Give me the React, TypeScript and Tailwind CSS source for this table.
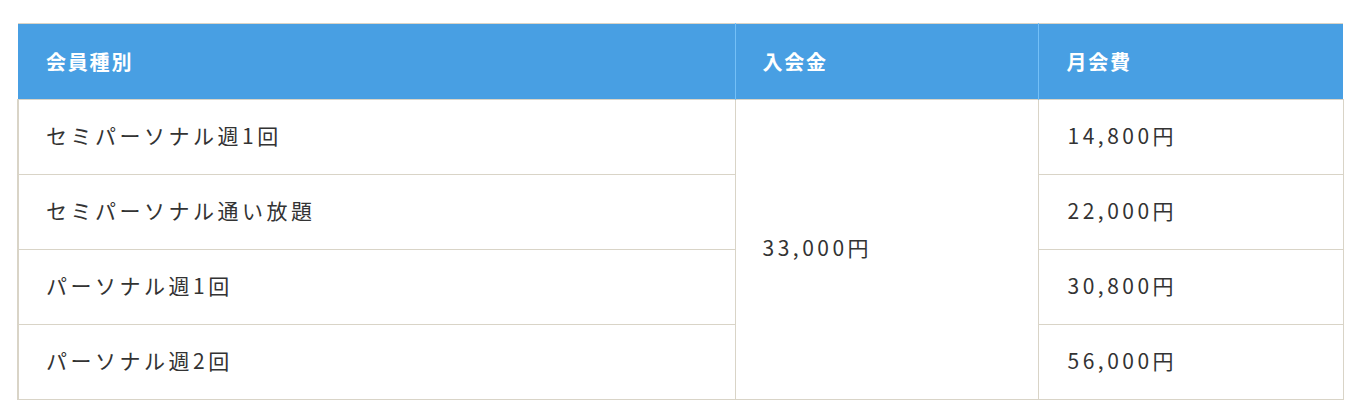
const rows = [
  { name: "セミパーソナル週1回", fee: "14,800円" },
  { name: "セミパーソナル通い放題", fee: "22,000円" },
  { name: "パーソナル週1回", fee: "30,800円" },
  { name: "パーソナル週2回", fee: "56,000円" },
];

const App = () => {
  return (
    <div
      className="min-h-[420px] bg-white pt-[23px] pl-[17px]"
      style={{ fontFamily: '"Noto Sans CJK JP", "Noto Sans", sans-serif' }}
    >
      <table className="w-[1325px] table-fixed border-collapse text-[21px] tracking-[3.5px]">
        <colgroup>
          <col className="w-[717px]" />
          <col className="w-[303px]" />
          <col className="w-[305px]" />
        </colgroup>
        <thead>
          <tr className="h-[76px] bg-[#489fe3] text-white">
            <th className="border-t border-t-[#d9d4c7] border-r border-r-[#74c0f7] pl-[28px] text-left font-bold text-[20px] tracking-[1.8px]">
              会員種別
            </th>
            <th className="border-t border-t-[#d9d4c7] border-r border-r-[#74c0f7] pl-[27px] text-left font-bold text-[20px] tracking-[1.8px]">
              入会金
            </th>
            <th className="border-t border-t-[#d9d4c7] pl-[28px] text-left font-bold text-[20px] tracking-[1.8px]">
              月会費
            </th>
          </tr>
        </thead>
        <tbody className="text-[#333]">
          {rows.map((row, index) => (
            <tr key={index} className="h-[75px]">
              <td className="border border-[#d9d4c7] border-l-2 pl-[27px] pb-[3px] font-normal">
                {row.name}
              </td>
              {index === 0 && (
                <td
                  rowSpan={4}
                  className="border border-[#d9d4c7] pl-[27px] pb-[3px] align-middle"
                >
                  33,000円
                </td>
              )}
              <td className="border border-[#d9d4c7] pl-[29px] pb-[3px]">{row.fee}</td>
            </tr>
          ))}
        </tbody>
      </table>
    </div>
  );
};

export default App;
